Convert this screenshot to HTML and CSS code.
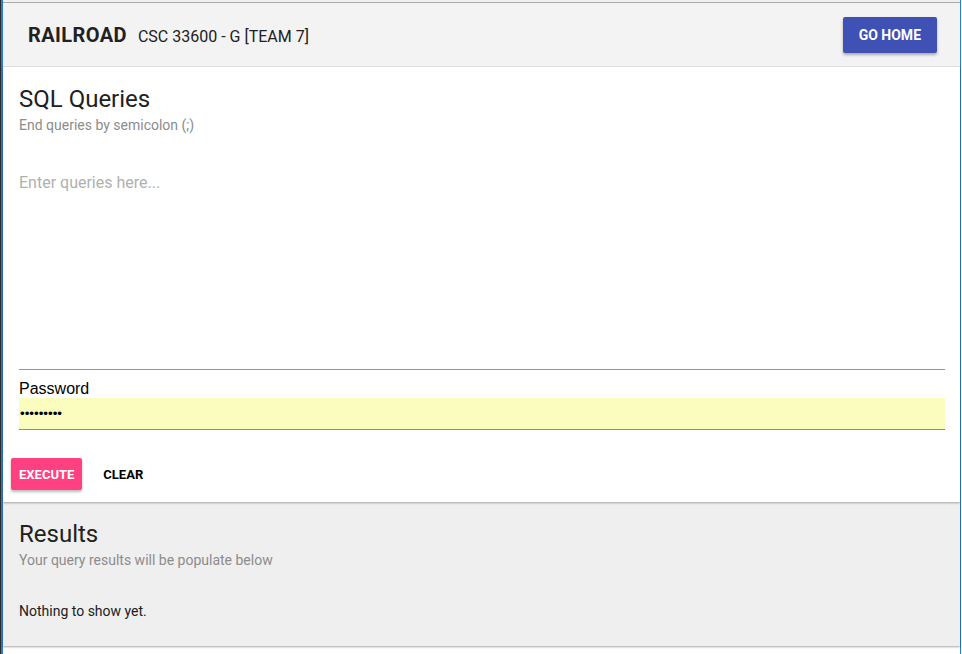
FILE: index.html
```html
<!DOCTYPE html>
<html lang="en">
<head>
<meta charset="utf-8">
<title>Railroad - SQL Queries</title>
<link rel="stylesheet" href="styles.css">
</head>
<body>
<div class="window">
  <div class="app">
    <div class="chrome-top"></div>
    <header class="topbar">
      <div class="brand">
        <span class="brand-name">RAILROAD</span>
        <span class="brand-sub">CSC 33600 - G [TEAM 7]</span>
      </div>
      <button class="btn btn-home" type="button">GO HOME</button>
    </header>
    <section class="card card-query">
      <div class="card-body">
        <h2 class="card-title">SQL Queries</h2>
        <p class="card-sub">End queries by semicolon (;)</p>
        <textarea class="query-input" placeholder="Enter queries here..."></textarea>
        <label class="pw-label" for="pw">Password</label>
        <input class="pw-input" id="pw" type="password" value="123456789">
      </div>
      <div class="actions">
        <button class="btn btn-exec" type="button">EXECUTE</button>
        <button class="btn btn-flat" type="button">CLEAR</button>
      </div>
    </section>
    <section class="card card-results">
      <h2 class="card-title">Results</h2>
      <p class="card-sub">Your query results will be populate below</p>
      <p class="empty">Nothing to show yet.</p>
    </section>
  </div>
</div>
</body>
</html>
```
FILE: styles.css
```css
html, body {
  margin: 0;
  padding: 0;
  background: #ffffff;
}

body {
  font-family: Roboto, "Liberation Sans", Arial, sans-serif;
  color: #212121;
}

.window {
  display: flex;
  height: 654px;
  overflow: hidden;
  border-left: 1px solid #2b2b2b;
  background: #ffffff;
}

.app {
  width: 957px;
  border-left: 2px solid #2a7bd4;
  border-right: 1px solid #2a7bd4;
  background: #ffffff;
}

.chrome-top {
  height: 2px;
  background: #f0f0f0;
}

.topbar {
  height: 63px;
  display: flex;
  align-items: center;
  justify-content: space-between;
  padding: 0 23px 0 25px;
  background: #f3f3f3;
  border-top: 1px solid #ababab;
  border-bottom: 1px solid #e4e4e4;
}

.brand {
  display: flex;
  align-items: baseline;
  gap: 11px;
}

.brand-name {
  font-size: 20px;
  font-weight: 700;
  letter-spacing: 0.4px;
  color: #212121;
}

.brand-sub {
  font-size: 16px;
  color: #212121;
}

.btn {
  border: none;
  margin: 0;
  cursor: pointer;
  font-family: Roboto, "Liberation Sans", Arial, sans-serif;
  font-weight: 700;
  border-radius: 2px;
  background: none;
}

.btn-home {
  height: 36px;
  padding: 0 16px;
  font-size: 14px;
  color: #ffffff;
  background: #3f51b5;
  box-shadow: 0 2px 3px rgba(0, 0, 0, 0.3);
}

.card {
  position: relative;
}

.card-query {
  background: #ffffff;
  box-shadow: 0 1px 2px rgba(0, 0, 0, 0.35);
  z-index: 2;
}

.card-body {
  padding: 16px 15px 0 16px;
}

.card-title {
  margin: 0;
  font-size: 24px;
  line-height: 32px;
  font-weight: 400;
  color: #212121;
}

.card-sub {
  margin: 0;
  font-size: 14px;
  line-height: 20px;
  color: #8c8c8c;
}

.query-input {
  display: block;
  width: 100%;
  height: 207px;
  box-sizing: border-box;
  margin: 28px 0 0;
  padding: 8px 0;
  font-family: Roboto, "Liberation Sans", Arial, sans-serif;
  font-size: 16px;
  line-height: 24px;
  color: #212121;
  border: none;
  border-bottom: 1px solid #949494;
  outline: none;
  resize: none;
  background: transparent;
}

.query-input::placeholder {
  color: #b0b0b0;
}

.pw-label {
  display: block;
  margin-top: 10px;
  font-family: "Liberation Sans", Arial, sans-serif;
  font-size: 16px;
  color: #000000;
}

.pw-input {
  display: block;
  width: 100%;
  height: 32px;
  box-sizing: border-box;
  margin: 0;
  padding: 0 1px;
  border: none;
  border-bottom: 1px solid #8a8a8a;
  outline: none;
  background: #fafdbd;
  font-family: "Liberation Sans", Arial, sans-serif;
  font-size: 13.333px;
  color: #000000;
}

.actions {
  display: flex;
  gap: 13px;
  padding: 28px 8px 12px;
}

.btn-exec {
  height: 32px;
  padding: 0 8px;
  font-size: 13px;
  color: #ffffff;
  background: #ff4081;
  box-shadow: 0 2px 3px rgba(0, 0, 0, 0.28);
}

.btn-flat {
  height: 32px;
  padding: 0 8px;
  font-size: 13px;
  color: #000000;
}

.card-results {
  margin-top: 1px;
  padding: 15px 16px 25px;
  background: #efefef;
  box-shadow: 0 1px 2px rgba(0, 0, 0, 0.35);
  z-index: 1;
}

.empty {
  margin: 31px 0 0;
  font-size: 14px;
  line-height: 20px;
  color: #212121;
}
```
